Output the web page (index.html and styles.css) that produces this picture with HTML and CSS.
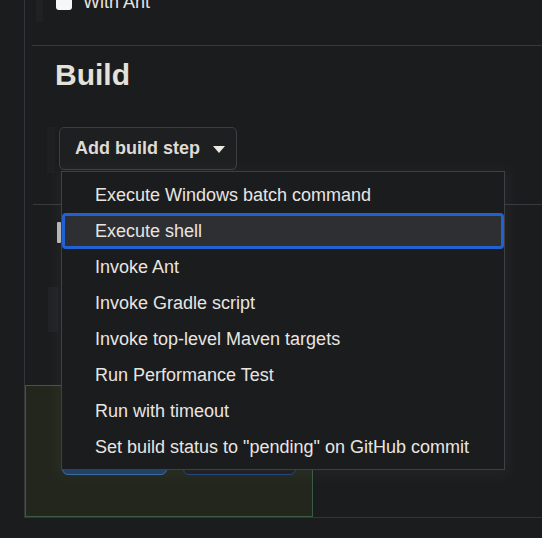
FILE: index.html
```html
<!DOCTYPE html>
<html lang="en">
<head>
<meta charset="utf-8">
<title>Build step</title>
<link rel="stylesheet" href="styles.css">
</head>
<body>
<div class="frame">
  <div class="ant-row">
    <div class="strip"></div>
    <label class="ant-check"><span class="box"></span><span>With Ant</span></label>
  </div>
  <div class="divider first"></div>
  <h2 class="title">Build</h2>
  <div class="step-row">
    <div class="strip tall"></div>
    <div class="dropdown">
      <button class="add-btn" type="button">Add build step <svg class="caret" width="12" height="7" viewBox="0 0 12 7"><path d="M0 0h12L6 7z" fill="#ece9e5"/></svg></button>
      <ul class="menu">
        <li>Execute Windows batch command</li>
        <li class="active">Execute shell</li>
        <li>Invoke Ant</li>
        <li>Invoke Gradle script</li>
        <li>Invoke top-level Maven targets</li>
        <li>Run Performance Test</li>
        <li>Run with timeout</li>
        <li>Set build status to "pending" on GitHub commit</li>
      </ul>
    </div>
  </div>
  <div class="divider second"></div>
  <div class="post">
    <div class="peek-bar"></div>
    <div class="peek-block"></div>
  </div>
  <div class="sticker">
    <button class="save" type="button" aria-label="Save"></button>
    <button class="apply" type="button" aria-label="Apply"></button>
  </div>
</div>
</body>
</html>
```

FILE: styles.css
```css
html, body {
  margin: 0;
  padding: 0;
}
body {
  background: #1b1c1e;
  color: #e6e3df;
  font-family: "Liberation Sans", Arial, sans-serif;
  width: 542px;
  height: 538px;
  overflow: hidden;
}
.frame {
  margin-left: 24px;
  height: 517px;
  border-left: 1px solid #333437;
  border-bottom: 1px solid #333437;
  display: flex;
  flex-direction: column;
}
.ant-row {
  display: flex;
  height: 22px;
}
.strip {
  width: 7px;
  margin-left: 11px;
  background: #202123;
}
.ant-check {
  display: flex;
  align-items: center;
  gap: 11px;
  margin-left: 13px;
  margin-top: -11px;
  height: 26px;
  font-size: 18px;
  color: #e6e3df;
}
.box {
  width: 16px;
  height: 16px;
  border-radius: 3px;
  background: #f7f7f7;
}
.divider {
  height: 1px;
  background: #38393c;
}
.divider.first {
  margin-top: 23px;
  margin-left: 7px;
}
.title {
  margin: 11px 0 0 30px;
  font-size: 30px;
  line-height: 36px;
  font-weight: bold;
  color: #e4e0da;
}
.step-row {
  display: flex;
  margin-top: 34px;
  height: 46px;
}
.strip.tall {
  width: 8px;
  margin-left: 22px;
  background: #1f2022;
}
.dropdown {
  position: relative;
  margin-left: 4px;
}
.add-btn {
  display: flex;
  align-items: center;
  gap: 13px;
  box-sizing: border-box;
  width: 178px;
  height: 43px;
  padding: 0 0 0 15px;
  border: 1px solid #3d3e41;
  border-radius: 5px;
  background: #1e1f21;
  color: #dedad4;
  font-family: inherit;
  font-size: 18px;
  font-weight: bold;
}
.caret {
  display: block;
  margin-top: 1px;
}
.menu {
  position: absolute;
  top: 44px;
  left: 2px;
  z-index: 5;
  box-sizing: border-box;
  width: 444px;
  margin: 0;
  padding: 5px 0 4px;
  list-style: none;
  background: #1b1c1e;
  border: 1px solid #3f4043;
  box-shadow: 0 2px 14px 6px rgba(255, 255, 255, 0.03);
}
.menu li {
  height: 36px;
  line-height: 36px;
  padding-left: 33px;
  font-size: 18px;
  color: #e8e5e1;
  white-space: nowrap;
}
.menu li.active {
  background: #2e2f33;
  border-radius: 4px;
  outline: 3px solid #2261d3;
  outline-offset: -3px;
}
.divider.second {
  margin-top: 31px;
  margin-left: 8px;
}
.post {
  flex: 1;
  display: flex;
  flex-direction: column;
}
.peek-bar {
  width: 4px;
  height: 21px;
  margin: 17px 0 0 32px;
  background: #b5b5b5;
  border-radius: 1px;
}
.peek-block {
  width: 10px;
  height: 45px;
  margin: 44px 0 0 23px;
  background: #212225;
}
.sticker {
  box-sizing: border-box;
  height: 132px;
  width: 288px;
  padding: 53px 0 0 36px;
  display: flex;
  gap: 16px;
  background: #22261c;
  border: 1px solid #3b5a44;
}
.sticker button {
  height: 36px;
  border-radius: 6px;
}
.save {
  width: 105px;
  background: #1d3d62;
  border: 1px solid #3a6aa2;
}
.apply {
  width: 113px;
  background: #1b1d20;
  border: 1px solid #23457a;
}
```
